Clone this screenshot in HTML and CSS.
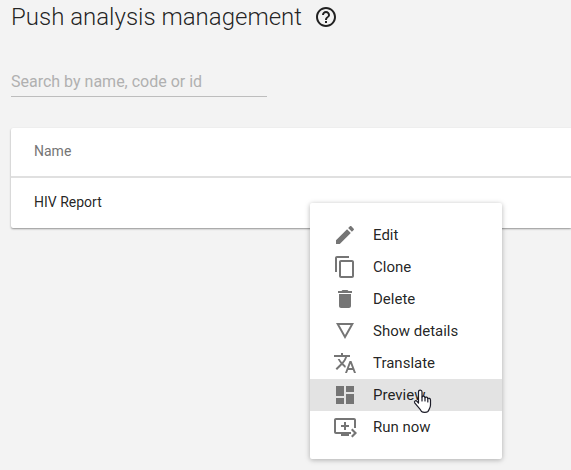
FILE: index.html
```html
<!DOCTYPE html>
<html lang="en">
<head>
<meta charset="utf-8">
<title>Push analysis management</title>
<link rel="stylesheet" href="styles.css">
</head>
<body>
<main class="page">
  <header class="heading">
    <h1 class="title">Push analysis management</h1>
    <a class="help" href="#help" aria-label="Help">
      <svg class="icon" viewBox="0 0 24 24"><path d="M11 18h2v-2h-2v2zm1-16C6.48 2 2 6.48 2 12s4.480 10 10 10 10-4.480 10-10S17.520 2 12 2zm0 18c-4.410 0-8-3.590-8-8s3.590-8 8-8 8 3.590 8 8-3.590 8-8 8zm0-14c-2.210 0-4 1.790-4 4h2c0-1.100.9-2 2-2s2 .9 2 2c0 2-3 1.750-3 5h2c0-2.250 3-2.500 3-5 0-2.210-1.790-4-4-4z"/></svg>
    </a>
  </header>
  <input class="search" type="search" aria-label="Search by name, code or id" placeholder="Search by name, code or id">
  <div class="list">
    <table class="table">
      <thead><tr><th scope="col">Name</th></tr></thead>
      <tbody><tr><td>HIV Report</td></tr></tbody>
    </table>
    <div class="menu" role="menu">
      <button class="item" role="menuitem"><svg class="icon" viewBox="0 0 24 24"><path d="M3 17.250V21h3.750L17.810 9.940l-3.750-3.750L3 17.250zM20.710 7.040c.39-.39.39-1.020 0-1.410l-2.340-2.340c-.39-.39-1.020-.39-1.410 0l-1.830 1.830 3.750 3.750 1.830-1.830z"/></svg>Edit</button>
      <button class="item" role="menuitem"><svg class="icon" viewBox="0 0 24 24"><path d="M16 1H4c-1.100 0-2 .9-2 2v14h2V3h12V1zm3 4H8c-1.100 0-2 .9-2 2v14c0 1.100.9 2 2 2h11c1.100 0 2-.9 2-2V7c0-1.100-.9-2-2-2zm0 16H8V7h11v14z"/></svg>Clone</button>
      <button class="item" role="menuitem"><svg class="icon" viewBox="0 0 24 24"><path d="M6 19c0 1.100.9 2 2 2h8c1.100 0 2-.9 2-2V7H6v12zM19 4h-3.500l-1-1h-5l-1 1H5v2h14V4z"/></svg>Delete</button>
      <button class="item" role="menuitem"><svg class="icon" viewBox="0 0 24 24"><path d="M3 4l9 16 9-16H3zm3.380 2h11.250L12 16 6.380 6z"/></svg>Show details</button>
      <button class="item" role="menuitem"><svg class="icon" viewBox="0 0 24 24"><path d="M12.870 15.070l-2.540-2.510.03-.03c1.740-1.940 2.980-4.170 3.710-6.530H17V4h-7V2H8v2H1v1.990h11.170C11.500 7.920 10.440 9.750 9 11.350 8.070 10.320 7.300 9.190 6.690 8h-2c.73 1.630 1.730 3.170 2.980 4.560l-5.090 5.020L4 19l5-5 3.110 3.110.76-2.040zM18.500 10h-2L12 22h2l1.120-3h4.750L21 22h2l-4.500-12zm-2.620 7l1.620-4.330L19.120 17h-3.240z"/></svg>Translate</button>
      <button class="item item-active" role="menuitem"><svg class="icon" viewBox="0 0 24 24"><path d="M3 13h8V3H3v10zm0 8h8v-6H3v6zm10 0h8V11h-8v10zm0-18v6h8V3h-8z"/></svg><span class="target">Preview
        <svg class="pointer" viewBox="0 0 19 24" aria-hidden="true"><path d="M5.500 14V3c0-2.600 3.500-2.600 3.500 0v5c.6-1.400 3-1 3 .7.8-1.100 2.800-.6 2.800 1 .8-.9 2.700-.4 2.700 1.300v5c0 3-1.500 4.200-2.500 6.500-1.500 1.200-5 1.200-6.500 0-1.300-3-4.800-5.900-6.800-8.700-.9-1.600 1-2.800 2.300-1.500L5.500 14z"/><path d="M9 8v4M12 8.700V12M14.800 9.700V13"/></svg></span></button>
      <button class="item" role="menuitem"><svg class="icon" viewBox="0 0 24 24"><path d="M21 3H3c-1.110 0-2 .89-2 2v12c0 1.100.89 2 2 2h5v2h8v-2h2v-2H3V5h18v8h2V5c0-1.110-.9-2-2-2zm-8 7V7h-2v3H8v2h3v3h2v-3h3v-2h-3zm11 8l-4.500 4.500L18 21l3-3-3-3 1.500-1.500L24 18z"/></svg>Run now</button>
    </div>
  </div>
</main>
</body>
</html>
```
FILE: styles.css
```css
* {
  box-sizing: border-box;
}

body {
  margin: 0;
  background: #f3f3f3;
  color: rgba(0, 0, 0, 0.87);
  font-family: Roboto, "Liberation Sans", sans-serif;
}

.page {
  min-height: 100vh;
  padding: 1px 0 0 11px;
}

.heading {
  display: flex;
  align-items: center;
  gap: 12px;
  height: 32px;
}

.title {
  margin: 0;
  font-size: 24px;
  font-weight: 300;
  line-height: 32px;
}

.icon {
  display: block;
  flex: none;
  width: 24px;
  height: 24px;
  fill: currentColor;
}

.help {
  color: #212121;
}

.search {
  display: block;
  width: 256px;
  height: 32px;
  margin: 32px 0 31px;
  padding: 2px 0 0;
  border: 0;
  border-bottom: 1px solid #bdbdbd;
  border-radius: 0;
  outline: 0;
  background: transparent;
  color: inherit;
  font: 16px/24px Roboto, "Liberation Sans", sans-serif;
  appearance: none;
}

.search::placeholder {
  color: #b0b0b0;
  opacity: 1;
}

.list {
  position: relative;
}

.table {
  width: 100%;
  border-collapse: separate;
  border-spacing: 0;
  background: #fff;
  border-radius: 2px 0 0 2px;
  box-shadow: 0 1px 2px rgba(0, 0, 0, 0.4);
  font-size: 14px;
  line-height: 20px;
}

.table th,
.table td {
  height: 50px;
  padding: 0 23px 2px;
  text-align: left;
  font-weight: 400;
}

.table th {
  border-bottom: 2px solid #e0e0e0;
  color: #757575;
}

.menu {
  position: absolute;
  top: 75px;
  left: 299px;
  width: 192px;
  padding: 16px 0;
  border-radius: 2px;
  background: #fff;
  box-shadow: 0 1px 6px rgba(0, 0, 0, 0.16), 0 1px 4px rgba(0, 0, 0, 0.14);
}

.item {
  display: flex;
  align-items: center;
  gap: 16px;
  width: 100%;
  height: 32px;
  padding: 0 23px;
  border: 0;
  background: transparent;
  color: rgba(0, 0, 0, 0.87);
  font: 15px/32px Roboto, "Liberation Sans", sans-serif;
  text-align: left;
  white-space: nowrap;
}

.item .icon {
  color: #757575;
}

.item-active {
  background: #e3e3e3;
}

.target {
  position: relative;
}

.pointer {
  position: absolute;
  top: 10px;
  left: 40px;
  width: 19px;
  height: 24px;
  fill: #fff;
  stroke: #1c1c28;
  stroke-width: 1.200;
  stroke-linecap: round;
  stroke-linejoin: round;
}
```
